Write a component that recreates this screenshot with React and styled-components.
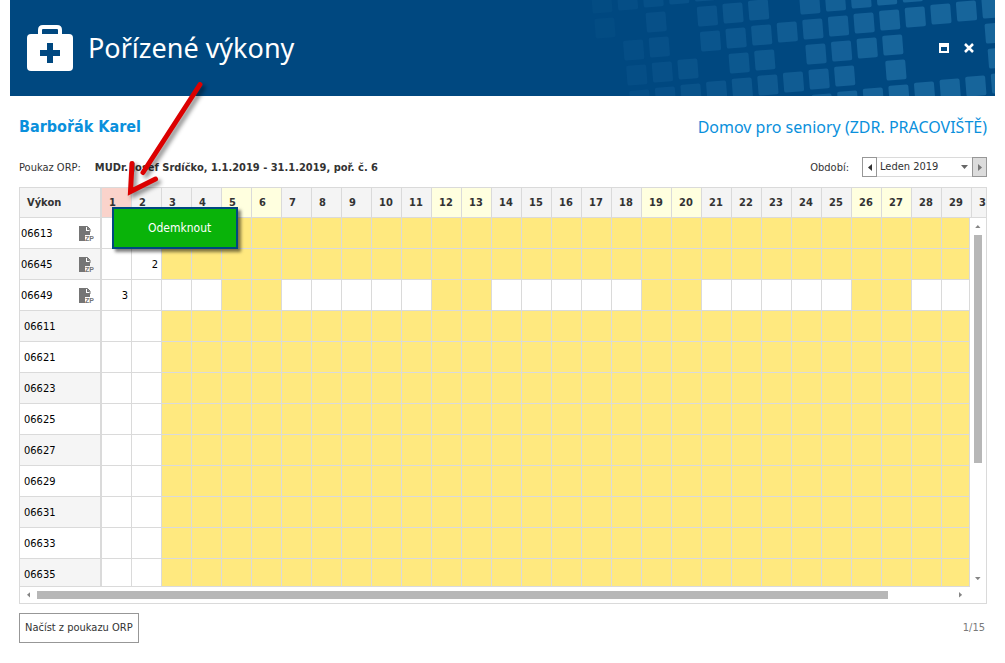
import React, { useState } from 'react';
import styled, { createGlobalStyle, css } from 'styled-components';

const GlobalStyle = createGlobalStyle`
    * {
        box-sizing: border-box;
    }
    body {
        margin: 0;
        background: #fff;
        color: #333;
        font-family: 'DejaVu Sans Condensed', 'DejaVu Sans', sans-serif;
        font-stretch: condensed;
        font-size: 11px;
        line-height: 14px;
    }
    button, select {
        margin: 0;
        padding: 0;
        font: inherit;
        font-stretch: inherit;
        color: inherit;
    }
`;

const LINE = '#dadada';
const DAYS = Array.from({ length: 30 }, (_, i) => i + 1);
const WEEKEND = [5, 6, 12, 13, 19, 20, 26, 27];

const ROWS = [
    { code: '06613', zp: true, values: {} },
    { code: '06645', zp: true, values: { 2: 2 } },
    { code: '06649', zp: true, values: { 1: 3 }, daily: true },
    { code: '06611' },
    { code: '06621' },
    { code: '06623' },
    { code: '06625' },
    { code: '06627' },
    { code: '06629' },
    { code: '06631' },
    { code: '06633' },
    { code: '06635' },
];

// row offset -> columns of the slanted mosaic in the header
const TILES = {
    '-2': [-12, -11, -10, -9, -8],
    '-1': [-12, -10, -8, -7, -6, -4, -3, -2, -1, 0],
    '0': [-11, -10, -8, -7, -6, -5, -4, -3, -2, -1, 0, 1, 2, 3],
    '1': [-11, -10, -9, -7, -6, -4, -3, -2, -1, 3],
    '2': [-11, -10, -9, -8, -7, -6, -5, -4, -3, -1, 3],
    '3': [-4, -3, -2, -1, 0, 1, 2, 3],
};

const Window = styled.div`
    position: relative;
    padding: 0 10px 20px;
`;

const TitleBar = styled.header`
    position: relative;
    display: flex;
    align-items: center;
    height: 96px;
    padding: 0 20px 0 17px;
    background: #004880;
    color: #fff;
    overflow: hidden;
`;

const Mosaic = styled.svg`
    position: absolute;
    top: 0;
    right: 0;
`;

const Title = styled.h1`
    flex: 1;
    margin: 0 0 0 15px;
    font-family: 'Noto Sans', sans-serif;
    font-size: 27px;
    font-weight: 400;
    line-height: 36px;
`;

const WindowButtons = styled.div`
    position: relative;
    display: flex;
    gap: 13px;
`;

const WindowButton = styled.button`
    display: flex;
    align-items: center;
    justify-content: center;
    width: 12px;
    height: 12px;
    border: 0;
    background: none;
    color: #fff;
`;

const Content = styled.main`
    padding: 0 8px 0 9px;
`;

const Line = styled.div`
    display: flex;
    align-items: center;
    justify-content: space-between;
`;

const HeadLine = styled(Line)`
    padding-top: 20px;
    color: #0a90dc;
`;

const Patient = styled.h2`
    margin: 0;
    font-size: 16px;
    font-weight: 700;
    line-height: 22px;
`;

const Workplace = styled.span`
    font-family: 'Noto Sans', sans-serif;
    font-size: 16px;
    line-height: 22px;
`;

const FilterLine = styled(Line)`
    padding: 19px 0 10px;
`;

const Voucher = styled.div`
    display: flex;
    gap: 14px;
    padding-top: 2px;
`;

const Period = styled.div`
    display: flex;
    align-items: center;
`;

const PeriodLabel = styled.label`
    margin-right: 13px;
    padding-top: 2px;
`;

const StepButton = styled.button`
    display: flex;
    align-items: center;
    justify-content: center;
    width: 15px;
    height: 20px;
    border: 1px solid #979797;
    background: ${({ $dim }) => ($dim ? '#dcdcdc' : '#fff')};
    color: ${({ $dim }) => ($dim ? '#777' : '#333')};
`;

const SelectBox = styled.div`
    position: relative;
    width: 95px;
`;

const Select = styled.select`
    display: block;
    width: 100%;
    height: 20px;
    padding: 0 3px;
    border: 1px solid ${LINE};
    border-width: 1px 0;
    border-radius: 0;
    background: #fff;
    appearance: none;
`;

const SelectArrow = styled.span`
    position: absolute;
    top: 8px;
    right: 4px;
    display: flex;
    color: #666;
    pointer-events: none;
`;

const Frame = styled.section`
    position: relative;
    border: 1px solid ${LINE};
`;

const Viewport = styled.div`
    height: 398px;
    overflow: hidden;
`;

const Table = styled.table`
    width: 982px;
    table-layout: fixed;
    border-collapse: separate;
    border-spacing: 0;
    color: #000;
`;

const cell = css`
    padding: 0;
    border: solid ${LINE};
    border-width: 0 1px 1px 0;
`;

const HeadCell = styled.th`
    ${cell}
    width: ${({ $wide }) => ($wide ? 82 : 30)}px;
    height: 30px;
    padding-left: 7px;
    border-right-width: ${({ $wide }) => ($wide ? 2 : 1)}px;
    background: ${({ $tone }) => ({ locked: '#fad3cb', weekend: '#ffffdf' }[$tone] || '#f4f4f4')};
    color: #333;
    font-weight: 700;
    text-align: left;
`;

const CodeCell = styled.th`
    ${cell}
    height: 31px;
    padding: 1px 6px 0 ${({ $zp }) => ($zp ? 1 : 4)}px;
    border-right-width: 2px;
    background: ${({ $odd }) => ($odd ? '#f5f5f5' : '#fff')};
    font-weight: 400;
    text-align: left;
`;

const Code = styled.div`
    display: flex;
    align-items: center;
    justify-content: space-between;
`;

const DayCell = styled.td`
    ${cell}
    padding: 1px 3px 0 0;
    background: ${({ $blocked }) => ($blocked ? '#ffe97f' : '#fff')};
    text-align: right;
`;

const ScrollBar = styled.div`
    display: flex;
    align-items: center;
    justify-content: space-between;
    background: #fff;
`;

const VerticalBar = styled(ScrollBar)`
    position: absolute;
    top: 30px;
    right: 0;
    bottom: 16px;
    width: 17px;
    flex-direction: column;
    border-left: 1px solid ${LINE};
`;

const HorizontalBar = styled(ScrollBar)`
    height: 17px;
    margin-right: 17px;
    border-top: 1px solid ${LINE};
`;

const ScrollButton = styled.button`
    display: flex;
    flex: none;
    align-items: center;
    justify-content: center;
    width: 17px;
    height: 17px;
    border: 0;
    background: none;
    color: #858585;
`;

const Track = styled.div`
    display: flex;
    flex: 1;
    flex-direction: ${({ $vertical }) => ($vertical ? 'column' : 'row')};
`;

const Thumb = styled.div`
    flex: 0 0 ${({ $size }) => $size}%;
    min-width: 8px;
    min-height: 8px;
    background: #b7b7b7;
`;

const ContextMenu = styled.div`
    position: absolute;
    top: 19px;
    left: 92px;
    width: 126px;
    border: 2px solid #004880;
    background: #09b309;
    box-shadow: 3px 3px 3px rgba(0, 0, 0, 0.5);
`;

const MenuItem = styled.button`
    display: block;
    width: 100%;
    height: 38px;
    padding-left: 34px;
    border: 0;
    background: none;
    color: #fff;
    font-size: 12px;
    text-align: left;
`;

const Footer = styled(Line)`
    padding: 9px 2px 0 0;
    color: #7a7a7a;
`;

const LoadButton = styled.button`
    height: 30px;
    padding: 0 5px;
    border: 1px solid #979797;
    background: #fff;
    color: #333;
`;

const Pointer = styled.svg`
    position: absolute;
    top: 76px;
    left: 120px;
    pointer-events: none;
`;

const CARETS = {
    left: [4, 7, 'M4 0v7L0 3.5z'],
    right: [4, 7, 'M0 0v7l4-3.5z'],
    up: [7, 4, 'M0 4h7L3.5 0z'],
    down: [7, 4, 'M0 0h7L3.5 4z'],
};

function Caret({ dir, scale = 1 }) {
    const [w, h, d] = CARETS[dir];
    return (
        <svg width={w * scale} height={h * scale} viewBox={`0 0 ${w} ${h}`} fill="currentColor" aria-hidden="true">
            <path d={d} />
        </svg>
    );
}

function HeaderMosaic() {
    return (
        <Mosaic width="415" height="96" viewBox="0 0 415 96" aria-hidden="true">
            {Object.entries(TILES).map(([row, cols]) => cols.map((col) => {
                const x = 335.3 + 25.6 * col + 3.1 * row;
                const y = 17 - 3 * col + 25 * row;
                return (
                    <rect
                        key={`${row}/${col}`}
                        x="-10"
                        y="-10"
                        width="20"
                        height="20"
                        rx="2"
                        fill="#17659b"
                        opacity={Math.min(1, Math.max(0.05, (x + 20) / 330))}
                        transform={`translate(${x} ${y}) rotate(-4.5)`}
                    />
                );
            }))}
        </Mosaic>
    );
}

function MedKitIcon() {
    return (
        <svg width="46" height="46" viewBox="0 0 46 46" aria-hidden="true">
            <path d="M13 11V5q0-3 3-3h14q3 0 3 3v6" fill="none" stroke="#fff" strokeWidth="4" />
            <rect y="9" width="46" height="37" rx="4" fill="#fff" />
            <path d="M20 18h6v7h7v6h-7v7h-6v-7h-7v-6h7z" fill="#004880" />
        </svg>
    );
}

function ZpIcon() {
    return (
        <svg width="15" height="16" viewBox="0 0 15 16" aria-hidden="true">
            <path d="M0 0h7v5h4v4H6v6H0z" fill="#757575" />
            <path d="M8 0l3 4H8z" fill="#757575" />
            <path d="M7.5 0v4.500H11" fill="none" stroke="#fff" />
            <path d="M7 .5h1.500L11 3v3" fill="none" stroke="#757575" />
            <text x="6" y="15" fill="#757575" fontFamily="Liberation Sans" fontSize="7" fontWeight="700">ZP</text>
        </svg>
    );
}

function RedPointer() {
    return (
        <Pointer width="95" height="130" viewBox="120 76 95 130" aria-hidden="true">
            <g
                fill="none"
                stroke="#dc0000"
                strokeLinecap="round"
                strokeWidth="5"
                style={{ filter: 'drop-shadow(3px 3px 2px rgba(0, 0, 0, 0.45))' }}
            >
                <path d="M200 84.500L143 172.500" />
                <path d="M132 163.500L130.500 191.500L155.500 179" strokeLinejoin="miter" />
            </g>
        </Pointer>
    );
}

export default function App() {
    const [period, setPeriod] = useState('Leden 2019');

    const isBlocked = (row, day) => (row.daily ? WEEKEND.includes(day) : day > 2);

    const dayTone = (day) => {
        if (day === 1) return 'locked';
        return WEEKEND.includes(day) ? 'weekend' : 'normal';
    };

    return (
        <Window>
            <GlobalStyle />
            <TitleBar>
                <HeaderMosaic />
                <MedKitIcon />
                <Title>Pořízené výkony</Title>
                <WindowButtons>
                    <WindowButton aria-label="Maximalizovat">
                        <svg width="10" height="10" viewBox="0 0 10 10">
                            <path d="M0 0h10v10H0zM2 4v4h6V4z" fill="currentColor" fillRule="evenodd" />
                        </svg>
                    </WindowButton>
                    <WindowButton aria-label="Zavřít">
                        <svg width="10" height="10" viewBox="0 0 10 10">
                            <path d="M1 1l8 8M9 1L1 9" stroke="currentColor" strokeWidth="2.500" />
                        </svg>
                    </WindowButton>
                </WindowButtons>
            </TitleBar>

            <Content>
                <HeadLine>
                    <Patient>Barbořák Karel</Patient>
                    <Workplace>Domov pro seniory (ZDR. PRACOVIŠTĚ)</Workplace>
                </HeadLine>
                <FilterLine>
                    <Voucher>
                        <span>Poukaz ORP:</span>
                        <b>MUDr. Josef Srdíčko, 1.1.2019 - 31.1.2019, poř. č. 6</b>
                    </Voucher>
                    <Period>
                        <PeriodLabel htmlFor="period">Období:</PeriodLabel>
                        <StepButton aria-label="Předchozí"><Caret dir="left" /></StepButton>
                        <SelectBox>
                            <Select id="period" value={period} onChange={(e) => setPeriod(e.target.value)}>
                                <option>Leden 2019</option>
                            </Select>
                            <SelectArrow><Caret dir="down" /></SelectArrow>
                        </SelectBox>
                        <StepButton $dim aria-label="Další"><Caret dir="right" /></StepButton>
                    </Period>
                </FilterLine>

                <Frame>
                    <Viewport>
                        <Table>
                            <thead>
                                <tr>
                                    <HeadCell $wide>Výkon</HeadCell>
                                    {DAYS.map((day) => (
                                        <HeadCell key={day} $tone={dayTone(day)}>{day}</HeadCell>
                                    ))}
                                </tr>
                            </thead>
                            <tbody>
                                {ROWS.map((row, index) => (
                                    <tr key={row.code}>
                                        <CodeCell scope="row" $zp={row.zp} $odd={index % 2 === 1}>
                                            <Code>
                                                {row.code}
                                                {row.zp && <ZpIcon />}
                                            </Code>
                                        </CodeCell>
                                        {DAYS.map((day) => (
                                            <DayCell key={day} $blocked={isBlocked(row, day)}>
                                                {row.values?.[day]}
                                            </DayCell>
                                        ))}
                                    </tr>
                                ))}
                            </tbody>
                        </Table>
                    </Viewport>
                    <VerticalBar>
                        <ScrollButton aria-label="Nahoru"><Caret dir="up" scale={0.8} /></ScrollButton>
                        <Track $vertical><Thumb $size={68} /></Track>
                        <ScrollButton aria-label="Dolů"><Caret dir="down" scale={0.8} /></ScrollButton>
                    </VerticalBar>
                    <HorizontalBar>
                        <ScrollButton aria-label="Doleva"><Caret dir="left" scale={0.8} /></ScrollButton>
                        <Track><Thumb $size={93} /></Track>
                        <ScrollButton aria-label="Doprava"><Caret dir="right" scale={0.8} /></ScrollButton>
                    </HorizontalBar>
                    <ContextMenu>
                        <MenuItem>Odemknout</MenuItem>
                    </ContextMenu>
                </Frame>

                <Footer>
                    <LoadButton>Načíst z poukazu ORP</LoadButton>
                    <span>1/15</span>
                </Footer>
            </Content>
            <RedPointer />
        </Window>
    );
}
